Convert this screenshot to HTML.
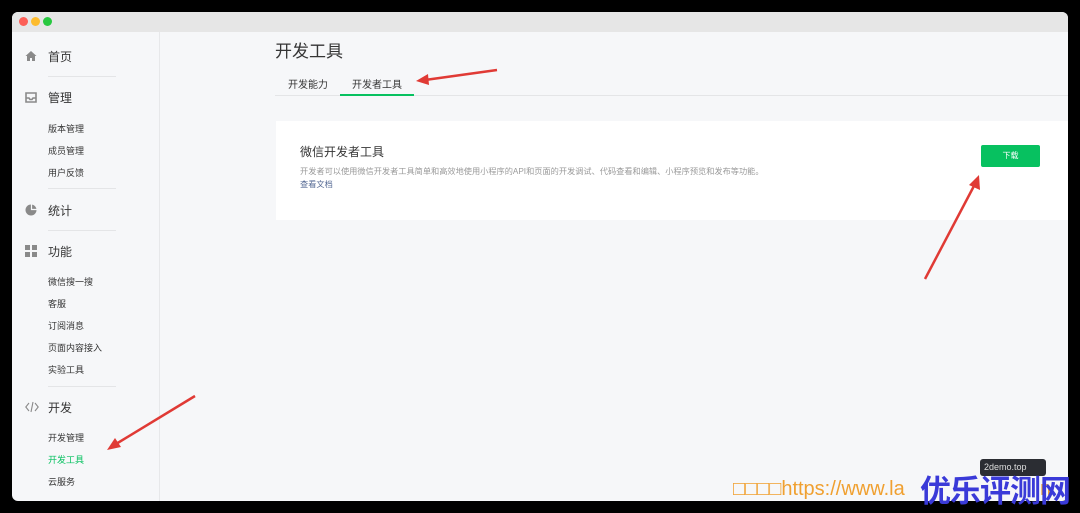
<!DOCTYPE html>
<html><head><meta charset="utf-8"><style>
*{margin:0;padding:0;box-sizing:border-box}
body{width:1080px;height:513px;background:#000;position:relative;overflow:hidden;font-family:"Liberation Sans","Noto Sans CJK SC",sans-serif}
.win{position:absolute;left:12px;top:12px;width:1056px;height:489px;background:#f6f7f9;border-radius:6px;overflow:hidden}
.tb{height:20px;background:#e6e6e6;position:relative}
.dot{position:absolute;top:5px;width:9px;height:9px;border-radius:50%}
.side{position:absolute;left:0;top:20px;width:148px;bottom:0;border-right:1px solid #e7e8ea}
.t{position:absolute;font-size:12px;color:#353535}
.s{position:absolute;font-size:9px;color:#353535;left:36px}
.hr{position:absolute;left:36px;width:68px;height:1px;background:#e4e5e7}
.ic{position:absolute;left:13px}
.a{position:absolute}
</style></head><body>
<div class="win">
<div class="tb"><span class="dot" style="left:7px;background:#fc5f57"></span><span class="dot" style="left:19px;background:#fdbc2e"></span><span class="dot" style="left:31px;background:#28c840"></span></div>
<div class="side"></div>
<svg class="ic" style="top:38px" width="12" height="12" viewBox="0 0 12 12"><path d="M6 1L0.5 6H2V11H5V8H7V11H10V6H11.5Z" fill="#8a8a8a"/></svg>
<div class="t" style="left:36px;top:36px">首页</div>
<div class="hr" style="top:64px"></div>
<svg class="ic" style="top:79px" width="12" height="12" viewBox="0 0 12 12"><path d="M1 2H11V11H1Z M1 7H4L5 8.5H7L8 7H11" fill="none" stroke="#8a8a8a" stroke-width="1.6"/></svg>
<div class="t" style="left:36px;top:77px">管理</div>
<div class="s" style="top:110px">版本管理</div>
<div class="s" style="top:132px">成员管理</div>
<div class="s" style="top:154px">用户反馈</div>
<div class="hr" style="top:176px"></div>
<svg class="ic" style="top:192px" width="12" height="12" viewBox="0 0 12 12"><circle cx="6" cy="6" r="5.5" fill="#8a8a8a"/><path d="M6.5 0.5V5.5H11.5" fill="none" stroke="#f6f7f9" stroke-width="1.2"/></svg>
<div class="t" style="left:36px;top:190px">统计</div>
<div class="hr" style="top:218px"></div>
<svg class="ic" style="top:233px" width="12" height="12" viewBox="0 0 12 12"><rect x="0" y="0" width="5" height="5" fill="#8a8a8a"/><rect x="7" y="0" width="5" height="5" fill="#8a8a8a"/><rect x="0" y="7" width="5" height="5" fill="#8a8a8a"/><rect x="7" y="7" width="5" height="5" fill="#8a8a8a"/></svg>
<div class="t" style="left:36px;top:231px">功能</div>
<div class="s" style="top:263px">微信搜一搜</div>
<div class="s" style="top:285px">客服</div>
<div class="s" style="top:307px">订阅消息</div>
<div class="s" style="top:329px">页面内容接入</div>
<div class="s" style="top:351px">实验工具</div>
<div class="hr" style="top:374px"></div>
<svg class="ic" style="top:389px" width="14" height="12" viewBox="0 0 14 12"><path d="M4 2L0.8 6L4 10M10 2L13.2 6L10 10M8 1L6 11" fill="none" stroke="#8a8a8a" stroke-width="1.1"/></svg>
<div class="t" style="left:36px;top:387px">开发</div>
<div class="s" style="top:419px">开发管理</div>
<div class="s" style="top:441px;color:#07c160">开发工具</div>
<div class="s" style="top:463px">云服务</div>
<div class="a" style="left:263px;top:25px;font-size:17px;color:#353535">开发工具</div>
<div class="a" style="left:276px;top:64px;font-size:10px;color:#353535">开发能力</div>
<div class="a" style="left:340px;top:64px;font-size:10px;color:#353535">开发者工具</div>
<div class="a" style="left:263px;top:83px;width:793px;height:1px;background:#e4e5e7"></div>
<div class="a" style="left:328px;top:82px;width:74px;height:2px;background:#07c160"></div>
<div class="a" style="left:264px;top:109px;width:792px;height:99px;background:#fff"></div>
<div class="a" style="left:288px;top:131px;font-size:12px;color:#353535">微信开发者工具</div>
<div class="a" style="left:288px;top:153px;font-size:8.2px;color:#9a9a9a;white-space:nowrap">开发者可以使用微信开发者工具简单和高效地使用小程序的API和页面的开发调试、代码查看和编辑、小程序预览和发布等功能。</div>
<div class="a" style="left:288px;top:166px;font-size:8.2px;color:#576b95">查看文档</div>
<div class="a" style="left:969px;top:133px;width:59px;height:22px;background:#07c160;border-radius:2px;color:#fff;font-size:8px;text-align:center;line-height:22px">下载</div>
<div class="a" style="left:968px;top:447px;width:66px;height:17px;background:#2b2d33;border-radius:3px;color:#ddd;font-size:9px;padding:3px 0 0 4px">2demo.top</div>
</div>
<svg class="a" style="left:0;top:0" width="1080" height="513"><g stroke="#e03a35" stroke-width="2.5" fill="#e03a35">
<line x1="497" y1="70" x2="425" y2="80"/><path d="M416 81L428 74L429 85Z" stroke="none"/>
<line x1="925" y1="279" x2="975" y2="184"/><path d="M979 175L980 190L969 185Z" stroke="none"/>
<line x1="195" y1="396" x2="116" y2="444"/><path d="M107 450L115 438L121 447Z" stroke="none"/>
</g></svg>
<div class="a" style="left:733px;top:478px;font-size:20px;color:#f0a030;white-space:nowrap">□□□□https://www.la</div>
<div class="a" style="left:1040px;top:478px;font-size:20px;color:#f0a030">n</div>
<div class="a" style="left:920px;top:466px;font-size:31px;font-weight:bold;color:#3a3ad8;letter-spacing:-1px;white-space:nowrap">优乐评测网</div>
</body></html>
